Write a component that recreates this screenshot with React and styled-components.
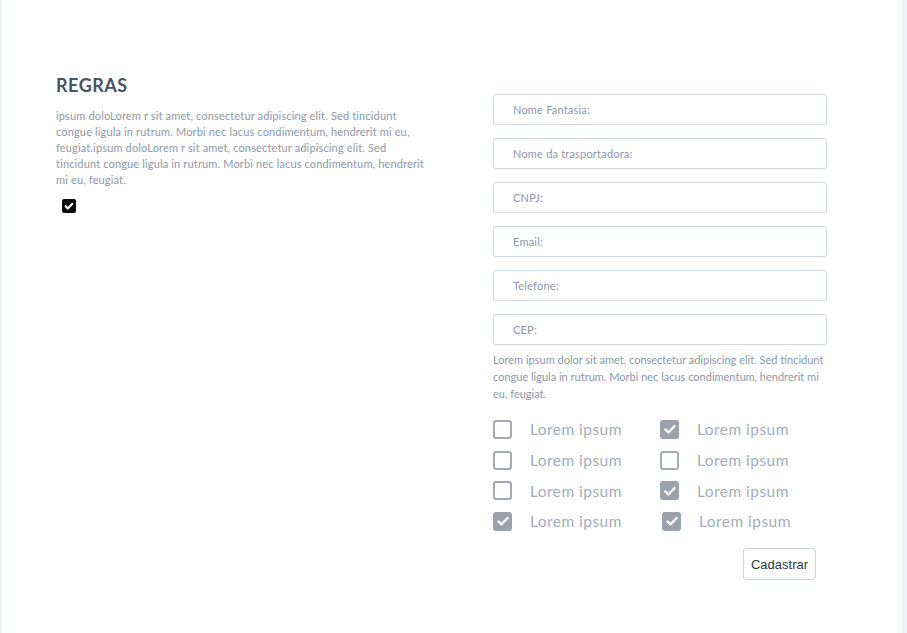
import React from 'react';
import styled, { createGlobalStyle } from 'styled-components';

const GlobalStyle = createGlobalStyle`
  html, body {
    margin: 0;
    padding: 0;
    background: #eef1f6;
    font-family: Lato, "Open Sans", sans-serif;
  }
  * { box-sizing: border-box; }
`;

const Page = styled.div`
  height: 633px;
  padding-left: 2px;
  overflow: hidden;
`;

const Panel = styled.div`
  width: 900px;
  height: 633px;
  background: #ffffff;
  display: grid;
  grid-template-columns: 376px 334px;
  column-gap: 61px;
  align-items: start;
  padding: 74px 0 0 54px;
`;

const Rules = styled.section`
  display: flex;
  flex-direction: column;
`;

const Title = styled.h2`
  margin: 0 0 12px;
  font-size: 18px;
  font-weight: 700;
  line-height: 22px;
  letter-spacing: 0.5px;
  color: #4a5363;
`;

const RulesText = styled.p`
  margin: 0;
  font-size: 11px;
  line-height: 16px;
  letter-spacing: 0.15px;
  white-space: nowrap;
  color: #8d97a9;
`;

const AgreeBox = styled.span`
  width: 14px;
  height: 14px;
  margin: 11px 0 0 6px;
  border-radius: 2px;
  background: #0b0b0b;
  display: flex;
  align-items: center;
  justify-content: center;
`;

const Form = styled.form`
  margin-top: 20px;
  display: flex;
  flex-direction: column;
`;

const Fields = styled.div`
  display: flex;
  flex-direction: column;
  gap: 13px;
`;

const Field = styled.input`
  height: 31px;
  width: 100%;
  border: 1px solid #d5dae3;
  border-radius: 3px;
  padding: 0 0 0 19px;
  font-family: Lato, sans-serif;
  font-size: 11px;
  letter-spacing: 0.2px;
  color: #5a6373;
  outline: none;
  &::placeholder {
    color: #8c96a8;
  }
`;

const Note = styled.p`
  margin: 6px -6px 0 0;
  font-size: 11px;
  line-height: 17px;
  color: #8d97a9;
`;

const Options = styled.div`
  margin-top: 12px;
  display: grid;
  grid-template-columns: 167px 167px;
  grid-auto-rows: 30.7px;
`;

const Option = styled.label`
  display: flex;
  align-items: center;
  gap: 18px;
  font-size: 15.5px;
  letter-spacing: 0.45px;
  color: #a4acb9;
  padding-left: ${(p) => p.shift || 0}px;
`;

const Box = styled.span`
  width: 19px;
  height: 19px;
  border-radius: 3px;
  border: ${(p) => (p.checked ? 'none' : '2px solid #a3aab4')};
  background: ${(p) => (p.checked ? '#9ba2ad' : '#ffffff')};
  display: flex;
  align-items: center;
  justify-content: center;
  flex-shrink: 0;
`;

const Actions = styled.div`
  display: flex;
  justify-content: flex-end;
  padding-right: 11px;
  margin-top: 11px;
`;

const Button = styled.button`
  height: 32px;
  width: 73px;
  background: #ffffff;
  border: 1px solid #cdd2da;
  border-radius: 3px;
  font-family: "Liberation Sans", Arial, sans-serif;
  font-size: 13px;
  color: #333a44;
  padding: 2px 0 0;
  cursor: pointer;
`;

const Check = ({ size = 12, width = 2.4 }) => (
  <svg width={size} height={size} viewBox="0 0 12 12" fill="none">
    <path d="M2 6.3l2.6 2.6L10 3.4" stroke="#ffffff" strokeWidth={width} strokeLinecap="round" strokeLinejoin="round" />
  </svg>
);

const fields = ['Nome Fantasia:', 'Nome da trasportadora:', 'CNPJ:', 'Email:', 'Telefone:', 'CEP:'];

const rules = [
  'ipsum doloLorem r sit amet, consectetur adipiscing elit. Sed tincidunt',
  'congue ligula in rutrum. Morbi nec lacus condimentum, hendrerit mi eu,',
  'feugiat.ipsum doloLorem r sit amet, consectetur adipiscing elit. Sed',
  'tincidunt congue ligula in rutrum. Morbi nec lacus condimentum, hendrerit',
  'mi eu, feugiat.',
];

const options = [
  { checked: false }, { checked: true },
  { checked: false }, { checked: false },
  { checked: false }, { checked: true },
  { checked: true }, { checked: true, shift: 2 },
];

const App = () => {
  return (
    <Page>
      <GlobalStyle />
      <Panel>
        <Rules>
          <Title>REGRAS</Title>
          <RulesText>
            {rules.map((line, i) => (
              <React.Fragment key={i}>
                {line}
                {i < rules.length - 1 && <br />}
              </React.Fragment>
            ))}
          </RulesText>
          <AgreeBox>
            <Check size={10} width={2.6} />
          </AgreeBox>
        </Rules>
        <Form onSubmit={(e) => e.preventDefault()}>
          <Fields>
            {fields.map((f) => (
              <Field key={f} placeholder={f} />
            ))}
          </Fields>
          <Note>
            Lorem ipsum dolor sit amet, consectetur adipiscing elit. Sed tincidunt congue ligula in rutrum. Morbi nec lacus condimentum, hendrerit mi eu, feugiat.
          </Note>
          <Options>
            {options.map((o, i) => (
              <Option key={i} shift={o.shift}>
                <Box checked={o.checked}>{o.checked && <Check size={14} width={1.9} />}</Box>
                Lorem ipsum
              </Option>
            ))}
          </Options>
          <Actions>
            <Button type="submit">Cadastrar</Button>
          </Actions>
        </Form>
      </Panel>
    </Page>
  );
};

export default App;
